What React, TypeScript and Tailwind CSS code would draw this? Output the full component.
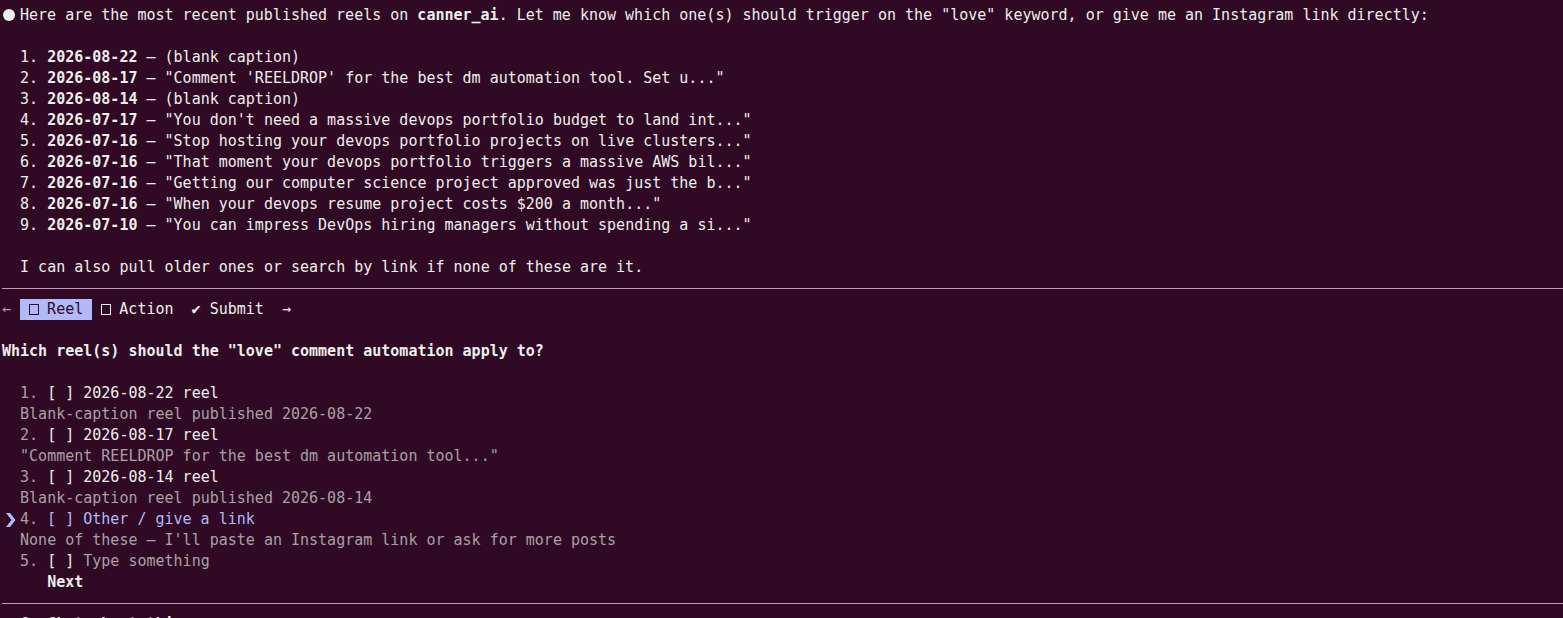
import React from "react";

const W = "text-[#eeeeec]";
const DIM = "text-[#a9a0a6]";
const LAV = "text-[#b1b9f9]";

function Row({ children, className = "" }: { children?: React.ReactNode; className?: string }) {
  return <div className={`h-[21px] leading-[21px] whitespace-pre ${className}`}>{children}</div>;
}

function Sep() {
  return (
    <div className="h-[21px] flex items-center">
      <div className="w-full border-t border-[#c39cbd]" />
    </div>
  );
}

function Box() {
  return (
    <span className="inline-block w-[9px] h-[21px] align-top relative">
      <span className="absolute left-[0px] top-[5px] w-[10px] h-[11px] border border-current" />
    </span>
  );
}

const reels: [string, string][] = [
  ["2026-08-22", "(blank caption)"],
  ["2026-08-17", "\"Comment 'REELDROP' for the best dm automation tool. Set u...\""],
  ["2026-08-14", "(blank caption)"],
  ["2026-07-17", "\"You don't need a massive devops portfolio budget to land int...\""],
  ["2026-07-16", "\"Stop hosting your devops portfolio projects on live clusters...\""],
  ["2026-07-16", "\"That moment your devops portfolio triggers a massive AWS bil...\""],
  ["2026-07-16", "\"Getting our computer science project approved was just the b...\""],
  ["2026-07-16", "\"When your devops resume project costs $200 a month...\""],
  ["2026-07-10", "\"You can impress DevOps hiring managers without spending a si...\""],
];

export default function App() {
  return (
    <div
      className={`w-[1563px] h-[618px] overflow-hidden bg-[#300a24] ${W} text-[15px] pt-[5px] pl-[2px]`}
      style={{ fontFamily: '"DejaVu Sans Mono", "Liberation Mono", monospace' }}
    >
      <div className="h-[21px] leading-[21px] whitespace-pre flex items-center">
        <span className="w-[18px] flex items-center">
          <span className="w-[12px] h-[12px] rounded-full bg-[#eeeeec] ml-[1px] -mt-[1px]" />
        </span>
        <span>
          {"Here are the most recent published reels on "}
          <span className="font-bold">canner_ai</span>
          {". Let me know which one(s) should trigger on the \"love\" keyword, or give me an Instagram link directly:"}
        </span>
      </div>
      <Row />
      {reels.map(([d, c], i) => (
        <Row key={i}>
          {`  ${i + 1}. `}
          <span className="font-bold">{d}</span>
          {` — ${c}`}
        </Row>
      ))}
      <Row />
      <Row>{"  I can also pull older ones or search by link if none of these are it."}</Row>
      <Sep />
      <Row>
        <span className={DIM}>{"← "}</span>
        <span className="bg-[#b1b9f9] text-[#300a24] inline-block h-[21px] align-top">
          {" "}
          <Box />
          {" Reel "}
        </span>
        {" "}
        <Box />
        {" Action  ✔ Submit  →"}
      </Row>
      <Row />
      <Row className="font-bold">{"Which reel(s) should the \"love\" comment automation apply to?"}</Row>
      <Row />
      <Row>
        <span className={DIM}>{"  1. "}</span>
        {"[ ] 2026-08-22 reel"}
      </Row>
      <Row className={DIM}>{"  Blank-caption reel published 2026-08-22"}</Row>
      <Row>
        <span className={DIM}>{"  2. "}</span>
        {"[ ] 2026-08-17 reel"}
      </Row>
      <Row className={DIM}>{"  \"Comment REELDROP for the best dm automation tool...\""}</Row>
      <Row>
        <span className={DIM}>{"  3. "}</span>
        {"[ ] 2026-08-14 reel"}
      </Row>
      <Row className={DIM}>{"  Blank-caption reel published 2026-08-14"}</Row>
      <Row className={LAV}>
        <span className="inline-block w-[18px] h-[21px] align-top relative">
          <svg className="absolute left-[3px] top-[4px]" width="11" height="14" viewBox="0 0 11 14">
            <path d="M1 0 L5 0 L10.5 7 L5 14 L1 14 L6.5 7 Z" fill="#b1b9f9" />
          </svg>
        </span>
        <span className={DIM}>{"4. "}</span>
        {"[ ] Other / give a link"}
      </Row>
      <Row className={DIM}>{"  None of these — I'll paste an Instagram link or ask for more posts"}</Row>
      <Row className={DIM}>
        {"  5. "}
        <span className={W}>{"[ ]"}</span>
        {" Type something"}
      </Row>
      <Row className="font-bold">{"     Next"}</Row>
      <Sep />
      <Row className="font-bold">{"  6. Chat about this"}</Row>
    </div>
  );
}
